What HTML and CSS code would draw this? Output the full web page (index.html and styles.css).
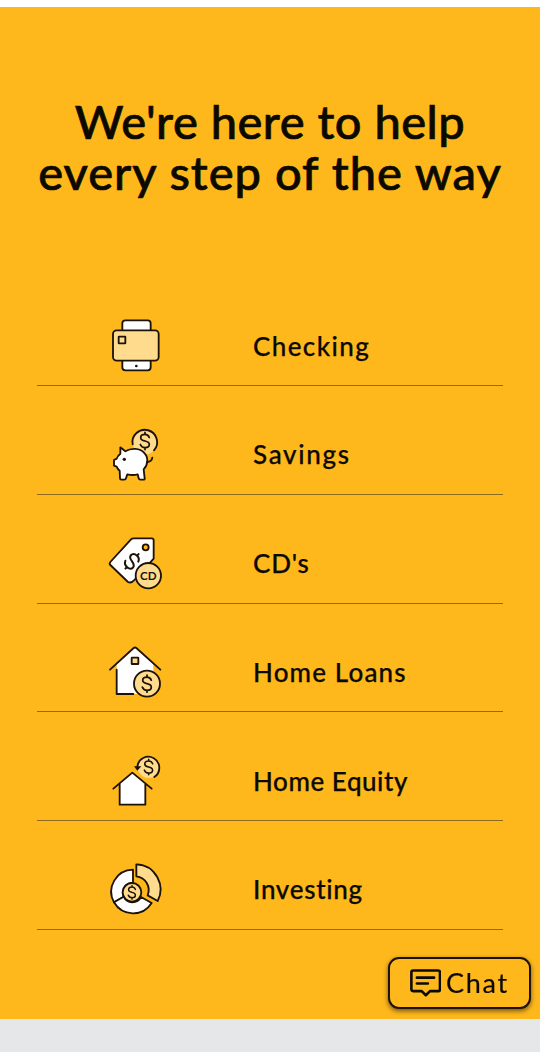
FILE: index.html
```html
<!DOCTYPE html>
<html lang="en">
<head>
    <meta charset="UTF-8">
    <meta name="viewport" content="width=device-width, initial-scale=1.0">
    <title>We're here to help</title>
    <link rel="stylesheet" href="styles.css">
</head>
<body>
    <!-- Dollar icon used inside the coins -->
    <svg class="symbols" width="0" height="0">
        <symbol id="dollar" viewBox="-30 -30 60 60">
            <path d="M11-9C9-15 5-17 0-17c-6 0-11 3-11 8.500C-11-2-5-1 0 0s11 2.500 11 9c0 5-5 8-11 8-5 0-10-3-12-8M0-22v5M0 17v5"/>
        </symbol>
    </svg>

    <main class="help">
        <h1><span class="line-one">We're here to help</span> <span class="line-two">every step of the way</span></h1>

        <ul class="services">
            <li>
                <svg class="icon" viewBox="0 0 210 210">
                    <path class="white" d="M67 60V40q0-9 9-9h67q9 0 9 9v20M67 152v20q0 9 9 9h67q9 0 9-9v-20"/>
                    <rect class="light" x="39" y="61" width="137" height="91" rx="11"/>
                    <rect class="light" x="56" y="80" width="20" height="20" rx="1"/>
                    <circle cx="109" cy="168" r="4"/>
                </svg>
                <a href="#" class="name checking">Checking</a>
            </li>
            <li class="savings-row">
                <svg class="icon" viewBox="0 0 210 210">
                    <circle class="light no-line" cx="135" cy="66" r="37"/>
                    <path class="line" d="M98 73A37 37 0 1 1 162 91"/>
                    <use class="line" href="#dollar" x="100" y="28" width="70" height="70"/>
                    <path class="white" d="M61 82l15 12c17-11 44-10 56 4 14 14 13 35-1 50l3 27q1 4-4 4h-9q-4 0-5-4l-3-12q-14 4-31 0l-4 12q-1 4-5 4h-9q-4 0-4-4l-1-23q-6-4-9-12l-8-3v-17l8-4q3-9 11-15z"/>
                    <path class="line" d="M141 126q14 0 16-13"/>
                    <circle cx="73" cy="118" r="5"/>
                </svg>
                <a href="#" class="name savings">Savings</a>
            </li>
            <li>
                <svg class="icon" viewBox="0 0 210 210">
                    <path class="white" d="M84 162L31 111q-4-4 0-9L93 34q3-3 8-3h54q6 0 6 6v55l-58 64q-9 11-19 6z"/>
                    <circle class="coin-hole" cx="137" cy="58" r="9"/>
                    <use class="line" href="#dollar" x="-40" y="-40" width="80" height="80" transform="translate(96 100) rotate(42)"/>
                    <circle class="light" cx="145" cy="143" r="38"/>
                    <text class="cd" x="145" y="155">CD</text>
                </svg>
                <a href="#" class="name cds">CD's</a>
            </li>
            <li>
                <svg class="icon" viewBox="0 0 210 210">
                    <path class="white no-line" d="M50 174V82l55-48 55 48v92z"/>
                    <path class="line" d="M30 101l71-65q4-3 8 0l72 65M50 101v73h50"/>
                    <rect class="light" x="95" y="65" width="20" height="19" rx="1"/>
                    <circle class="light" cx="141" cy="143" r="39"/>
                    <use class="line" href="#dollar" x="106" y="108" width="70" height="70"/>
                </svg>
                <a href="#" class="name loans">Home Loans</a>
            </li>
            <li>
                <svg class="icon" viewBox="0 0 210 210">
                    <path class="white no-line" d="M59 179v-64l38-32 38 32v64z"/>
                    <path class="line" d="M40 131l57-48 58 48M59 117v62h77v-62"/>
                    <circle class="light no-line" cx="146" cy="66" r="33"/>
                    <path class="line" d="M112 66A33 33 0 1 1 163 96"/>
                    <path d="M102 64h22l-12 13z"/>
                    <use class="line" href="#dollar" x="114" y="34" width="64" height="64"/>
                </svg>
                <a href="#" class="name equity">Home Equity</a>
            </li>
            <li class="investing-row">
                <svg class="icon" viewBox="0 0 210 210">
                    <path class="white" d="M99 50A66 66 0 0 0 42 148L71 131A29 29 0 0 1 99 90z"/>
                    <path class="white" d="M42 148A66 66 0 0 0 155 150L123 132A29 29 0 0 1 71 131z"/>
                    <path class="light" d="M109 34v36c28 4 44 30 34 57l30 17C197 99 168 36 109 34z"/>
                    <circle class="light" cx="96" cy="118" r="28"/>
                    <use class="line" href="#dollar" x="68" y="90" width="56" height="56"/>
                </svg>
                <a href="#" class="name investing">Investing</a>
            </li>
        </ul>
    </main>
    <footer></footer>

    <button type="button" class="chat">
        <svg viewBox="0 0 90 81">
            <path d="M9 4h73q5 0 5 5v50q0 5-5 5H58L46 76 34 64H9q-5 0-5-5V9q0-5 5-5z"/>
            <path d="M20 25h50M20 42h32"/>
        </svg>
        <span>Chat</span>
    </button>
</body>
</html>
```
FILE: styles.css
```css
/* Global Styles */
body {
    font-family: Lato, 'Open Sans', sans-serif;
    margin: 0;
    padding-top: 7px;
    background: #fff;
    color: #0c0a00;
    overflow: hidden;
}

.symbols {
    display: block;
}

.help {
    height: 1012px;
    padding: 89px 37px 0;
    background: #ffb81c;
    box-sizing: border-box;
}

h1 {
    margin: 0 -20px;
    font-size: 47px;
    font-weight: 500;
    line-height: 51px;
    text-align: center;
    white-space: nowrap;
    -webkit-text-stroke: 0.7px #0c0a00;
}

.line-one,
.line-two {
    display: block;
}

.line-one {
    letter-spacing: 0.5px;
}

.line-two {
    letter-spacing: 1px;
}

/* Service list */
.services {
    list-style: none;
    margin: 79.2px 0 0;
    padding: 0;
    display: grid;
    grid-auto-rows: 108.8px;
}

.services li {
    display: flex;
    align-items: flex-end;
    gap: 83px;
    padding: 0 0 5px 63px;
    width: 466px;
    box-sizing: border-box;
    border-bottom: 1px solid #8e6a1c;
}

.services .savings-row {
    padding-bottom: 4px;
}

.services .investing-row {
    padding-bottom: 6px;
}

.name {
    padding-bottom: 18.5px;
    font-size: 26px;
    font-weight: 500;
    line-height: 32px;
    color: inherit;
    text-decoration: none;
    white-space: nowrap;
    -webkit-text-stroke: 0.25px #0c0a00;
}

.checking {
    padding-bottom: 18px;
    letter-spacing: 1.4px;
}

.savings {
    padding-bottom: 19.5px;
    letter-spacing: 1.7px;
}

.cds {
    letter-spacing: 0.8px;
}

.loans {
    letter-spacing: 1.15px;
}

.equity {
    letter-spacing: 0.55px;
}

.investing {
    padding-bottom: 17.5px;
    letter-spacing: 0.7px;
}

/* Icons */
.icon {
    width: 70px;
    height: 70px;
    flex: none;
    fill: #1c1208;
    stroke-width: 5.5;
    stroke-linecap: round;
    stroke-linejoin: round;
}

.white,
.light,
.line,
.coin-hole {
    stroke: #1c1208;
}

.white {
    fill: #fff;
}

.light {
    fill: #ffdb8d;
}

.coin-hole {
    fill: #ffb81c;
}

.line {
    fill: none;
}

.icon use {
    stroke-width: 4.5;
}

.icon .no-line {
    stroke: none;
}

.cd {
    text-anchor: middle;
    font-family: Lato, sans-serif;
    font-size: 35px;
    font-weight: bold;
}

footer {
    height: 33px;
    background: #e6e7e9;
}

/* Chat button stays over the page */
.chat {
    position: fixed;
    right: 9px;
    bottom: 43px;
    width: 143px;
    height: 52px;
    padding: 0 0 0 20px;
    display: flex;
    align-items: center;
    gap: 5px;
    background: #ffb81c;
    border: 2px solid #1c1208;
    border-radius: 11px;
    box-shadow: 0 2px 5px rgba(0, 0, 0, 0.55);
    font-family: inherit;
    font-size: 27px;
    letter-spacing: 1.7px;
    line-height: 32px;
    color: #0c0a00;
    -webkit-text-stroke: 0.2px #0c0a00;
}

.chat svg {
    width: 31px;
    height: 28px;
    fill: none;
    stroke: #0c0a00;
    stroke-width: 7.5;
    stroke-linejoin: round;
    stroke-linecap: round;
}
```
